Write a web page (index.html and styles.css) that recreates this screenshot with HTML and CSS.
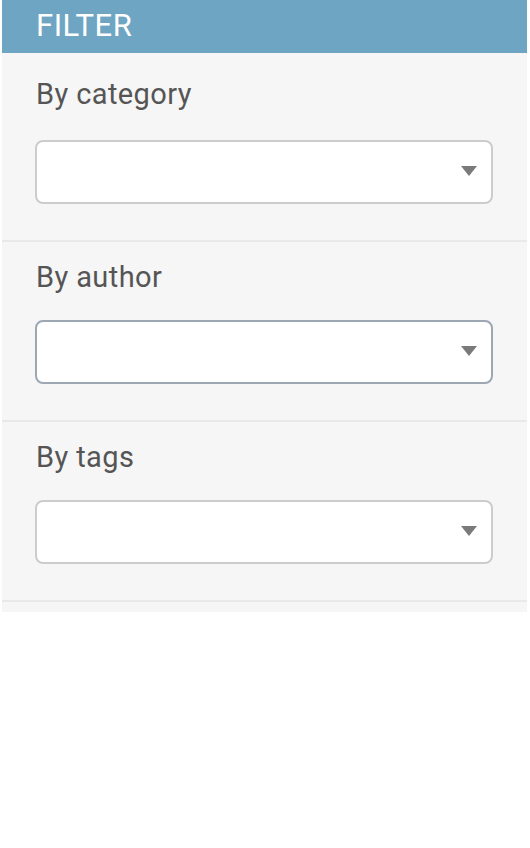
FILE: index.html
```html
<!DOCTYPE html>
<html>
<head>
<meta charset="utf-8">
<link rel="stylesheet" href="styles.css">
</head>
<body>
<div class="panel">
  <h2 class="panel-title">FILTER</h2>
  <div class="group group-first">
    <h3 class="group-title">By category</h3>
    <div class="select"><span class="arrow"></span></div>
  </div>
  <div class="group">
    <h3 class="group-title">By author</h3>
    <div class="select select-focus"><span class="arrow"></span></div>
  </div>
  <div class="group">
    <h3 class="group-title">By tags</h3>
    <div class="select"><span class="arrow"></span></div>
  </div>
</div>
</body>
</html>
```

FILE: styles.css
```css
html, body {
  margin: 0;
  padding: 0;
  background: #ffffff;
}
body {
  font-family: Roboto, "Liberation Sans", sans-serif;
}
.panel {
  width: 525px;
  margin-left: 2px;
  background: #f6f6f6;
  padding-bottom: 10px;
}
.panel-title {
  margin: 0;
  height: 53px;
  box-sizing: border-box;
  display: flex;
  align-items: center;
  padding: 0 0 2px 34px;
  background: #6ea5c2;
  color: #ffffff;
  font-size: 31px;
  font-weight: 400;
  letter-spacing: 0.5px;
}
.group {
  padding: 19px 34px 36px 33px;
  border-bottom: 2px solid #e9e9e9;
  display: flex;
  flex-direction: column;
}
.group-first {
  padding-top: 25px;
}
.group-title {
  margin: 0 0 27px 1px;
  font-size: 29px;
  line-height: 32px;
  letter-spacing: 0.4px;
  font-weight: 400;
  color: #555555;
}
.group-first .group-title {
  margin-bottom: 30px;
}
.select {
  height: 64px;
  box-sizing: border-box;
  background: #ffffff;
  border: 2px solid #cccccc;
  border-radius: 8px;
  display: flex;
  align-items: center;
  justify-content: flex-end;
  padding: 0 14px 2px 0;
}
.select-focus {
  border-color: #9ba7b3;
}
.arrow {
  width: 0;
  height: 0;
  border-left: 8.5px solid transparent;
  border-right: 8.5px solid transparent;
  border-top: 10px solid #7a7a7a;
}
```
